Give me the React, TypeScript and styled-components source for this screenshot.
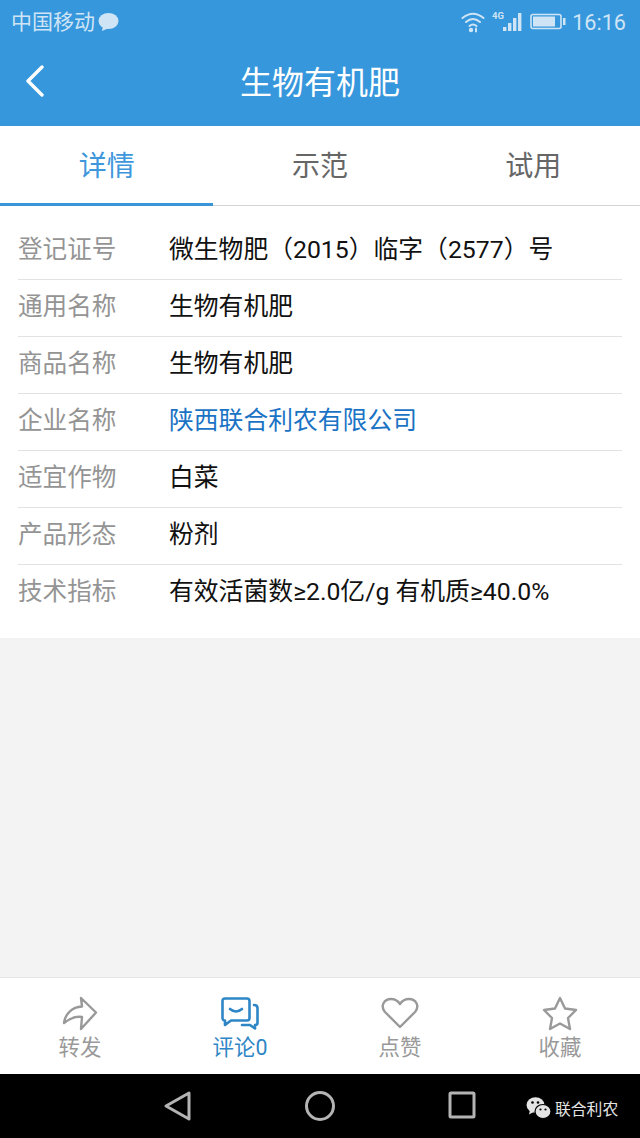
import React from 'react'
import styled, { createGlobalStyle } from 'styled-components'

const GlobalStyle = createGlobalStyle`
  html, body {
    margin: 0;
    padding: 0;
    background: #f3f3f3;
    font-family: Roboto, "Noto Sans CJK SC", sans-serif;
  }
`

/*
* Styles
*/

const Page = styled.div`
  display: flex;
  flex-direction: column;
  height: 1138px;
  width: 640px;
  overflow: hidden;
`

const Header = styled.header`
  background: #3697dc;
  display: flex;
  flex-direction: column;
  height: 126px;
`

const StatusBar = styled.div`
  align-items: center;
  color: #cfe5f6;
  display: flex;
  font-size: 21px;
  height: 43px;
  justify-content: space-between;
  padding: 0 14px 0 11px;
`

const StatusGroup = styled.div`
  align-items: center;
  display: flex;
  gap: ${p => p.$gap}px;
`

const Carrier = styled.span`
  padding-bottom: 4px;
`

const Time = styled.span`
  font-size: 21.6px;
  margin-left: -1px;
  padding-top: 1px;
`

const NavBar = styled.div`
  align-items: center;
  color: #fff;
  display: flex;
  flex: 1;
  font-size: 32px;
  justify-content: center;
  padding-bottom: 10px;
  position: relative;
`

const BackIcon = styled.svg`
  left: 25px;
  position: absolute;
  top: 22px;
`

const Tabs = styled.nav`
  background: #fff;
  border-bottom: 1px solid #d4d4d4;
  display: grid;
  grid-template-columns: repeat(3, 1fr);
  height: 79px;
`

const Tab = styled.div`
  align-items: center;
  border-bottom: ${p => (p.$active ? '3px solid #3a94d8' : 'none')};
  box-sizing: border-box;
  color: ${p => (p.$active ? '#3e97dc' : '#666')};
  display: flex;
  font-size: 28px;
  height: 80px;
  justify-content: center;
  padding-bottom: ${p => (p.$active ? '2px' : '5px')};
`

const Details = styled.section`
  background: #fff;
  box-sizing: border-box;
  display: flex;
  flex-direction: column;
  height: 432px;
  padding: 17px 18px 0;
`

const Row = styled.div`
  align-items: center;
  border-bottom: ${p => (p.$last ? 'none' : '1px solid #e2e2e2')};
  box-sizing: border-box;
  display: flex;
  font-size: 24.8px;
  height: 57px;
  padding-bottom: 9px;
`

const Label = styled.div`
  color: #949494;
  flex: none;
  font-size: 24.6px;
  width: 151px;
`

const Value = styled.div`
  color: ${p => (p.$link ? '#1a73c4' : '#111')};
  white-space: nowrap;
`

const Spacer = styled.div`
  background: #f3f3f3;
  flex: 1;
`

const ActionBar = styled.footer`
  background: #fff;
  border-top: 1px solid #e6e6e6;
  display: grid;
  grid-template-columns: repeat(4, 1fr);
  height: 96px;
`

const Action = styled.div`
  align-items: center;
  color: ${p => (p.$active ? '#2f86c6' : '#999')};
  display: flex;
  flex-direction: column;
  font-size: 21.4px;
  line-height: 26px;
  padding-top: 17px;
`

const ActionIcon = styled.div`
  align-items: center;
  display: flex;
  height: 36px;
  justify-content: center;
  margin-bottom: 4px;
`

const SystemNav = styled.div`
  align-items: center;
  background: #000;
  display: flex;
  height: 64px;
  position: relative;
`

const SystemIcon = styled.svg`
  position: absolute;
  top: 16px;
  left: ${p => p.$left}px;
`

const Watermark = styled.div`
  align-items: center;
  color: #e4e4e4;
  display: flex;
  font-size: 15.8px;
  gap: 3px;
  position: absolute;
  left: 526px;
  top: 22px;
`

/*
* Data
*/

const rows = [
  { label: '登记证号', value: '微生物肥（2015）临字（2577）号' },
  { label: '通用名称', value: '生物有机肥' },
  { label: '商品名称', value: '生物有机肥' },
  { label: '企业名称', value: '陕西联合利农有限公司', link: true },
  { label: '适宜作物', value: '白菜' },
  { label: '产品形态', value: '粉剂' },
  { label: '技术指标', value: '有效活菌数≥2.0亿/g 有机质≥40.0%' },
]

/*
* Icons
*/

const ForwardIcon = () => (
  <svg width="36" height="35" viewBox="0 0 36 35" fill="none" stroke="#999" strokeWidth="2.4" strokeLinejoin="round" strokeLinecap="round">
    <path d="M2 27 C3 18 10 11 20 10.5 L19 2 L34 16.5 L19 33 L20 21 C13 20 7 23 2 27 Z" />
  </svg>
)

const CommentIcon = () => (
  <svg width="38" height="33" viewBox="0 0 38 33" fill="none" stroke="#2f86c6" strokeWidth="2.6" strokeLinejoin="round" strokeLinecap="round">
    <path d="M4 1.5 H26 Q28.5 1.5 28.5 4 V21 Q28.5 23.5 26 23.5 H10 L4 28 V23.5 Q1.5 23.5 1.5 21 V4 Q1.5 1.5 4 1.5 Z" />
    <path d="M33 8 Q36.5 8 36.5 11 V26 Q36.5 28 34 28 V31.5 L29 28 H21" />
    <path d="M9 12 Q15 17 21 12" />
  </svg>
)

const HeartIcon = () => (
  <svg width="38" height="32" viewBox="0 0 38 32" fill="none" stroke="#999" strokeWidth="2.4" strokeLinejoin="round" strokeLinecap="round">
    <path d="M19 30 L4 15 C-1 9 3 2 10 2 C14 2 17 4 19 7 C21 4 24 2 28 2 C35 2 39 9 34 15 Z" />
  </svg>
)

const StarIcon = () => (
  <svg width="36" height="35" viewBox="0 0 36 35" fill="none" stroke="#999" strokeWidth="2.4" strokeLinejoin="round">
    <path d="M18 2 L23 12.5 L34 14 L26 22 L28 33 L18 27.5 L8 33 L10 22 L2 14 L13 12.5 Z" />
  </svg>
)

const WifiIcon = () => (
  <svg width="24" height="22" viewBox="0 0 24 22" fill="none" stroke="#cfe5f6" strokeWidth="2" strokeLinecap="round">
    <path d="M1.5 7 Q12 -1.5 22.5 7" />
    <path d="M5 11 Q12 5 19 11" />
    <path d="M8.5 15 Q12 12 15.5 15" />
    <circle cx="10" cy="19" r="1.2" fill="#cfe5f6" />
    <path d="M15 17.5 V20.5" />
  </svg>
)

const SignalIcon = () => (
  <svg width="31" height="24" viewBox="0 0 31 24" fill="#cfe5f6">
    <text x="0" y="9" fontSize="9.5" fontWeight="700" fontFamily="Roboto, sans-serif">4G</text>
    <rect x="11" y="17" width="3.4" height="4" />
    <rect x="16" y="13" width="3.4" height="8" />
    <rect x="21" y="8" width="3.4" height="13" />
    <rect x="26" y="3" width="3.4" height="18" />
  </svg>
)

const BatteryIcon = () => (
  <svg width="36" height="18" viewBox="0 0 36 18">
    <rect x="1" y="1.5" width="30" height="14" rx="2" fill="none" stroke="#cfe5f6" strokeWidth="1.6" />
    <rect x="3" y="3.5" width="22" height="10" fill="#cfe5f6" />
    <rect x="33" y="5" width="2.5" height="7" fill="#cfe5f6" />
  </svg>
)

const WechatIcon = () => (
  <svg width="26" height="24" viewBox="0 0 26 24">
    <ellipse cx="9.5" cy="9" rx="9" ry="7.8" fill="#e4e4e4" />
    <path d="M4 14 L3 18.5 L8.5 15.5 Z" fill="#e4e4e4" />
    <ellipse cx="17" cy="15.5" rx="8" ry="7" fill="#e4e4e4" stroke="#000" strokeWidth="1.2" />
    <circle cx="6.5" cy="6.5" r="1.3" fill="#000" />
    <circle cx="12" cy="6.5" r="1.3" fill="#000" />
    <circle cx="14.5" cy="13.5" r="1.1" fill="#000" />
    <circle cx="19.5" cy="13.5" r="1.1" fill="#000" />
  </svg>
)

/*
* Components
*/

export default function App() {
  return (
    <Page>
      <GlobalStyle />
      <Header>
        <StatusBar>
          <StatusGroup $gap={3}>
            <Carrier>中国移动</Carrier>
            <svg width="21" height="20" viewBox="0 0 21 20" fill="#cfe5f6">
              <ellipse cx="10.5" cy="9" rx="10" ry="8" />
              <path d="M5 14 L4 19 L11 16 Z" />
            </svg>
          </StatusGroup>
          <StatusGroup $gap={7}>
            <WifiIcon />
            <SignalIcon />
            <BatteryIcon />
            <Time>16:16</Time>
          </StatusGroup>
        </StatusBar>
        <NavBar>
          <BackIcon width="20" height="32" viewBox="0 0 20 32" fill="none" stroke="#fff" strokeWidth="3.4" strokeLinecap="round" strokeLinejoin="round">
            <path d="M17 2 L3 16 L17 30" />
          </BackIcon>
          生物有机肥
        </NavBar>
      </Header>
      <Tabs>
        <Tab $active>详情</Tab>
        <Tab>示范</Tab>
        <Tab>试用</Tab>
      </Tabs>
      <Details>
        {rows.map((row, i) => (
          <Row key={row.label} $last={i === rows.length - 1}>
            <Label>{row.label}</Label>
            <Value $link={row.link}>{row.value}</Value>
          </Row>
        ))}
      </Details>
      <Spacer />
      <ActionBar>
        <Action><ActionIcon><ForwardIcon /></ActionIcon>转发</Action>
        <Action $active><ActionIcon><CommentIcon /></ActionIcon>评论0</Action>
        <Action><ActionIcon><HeartIcon /></ActionIcon>点赞</Action>
        <Action><ActionIcon><StarIcon /></ActionIcon>收藏</Action>
      </ActionBar>
      <SystemNav>
        <SystemIcon $left={163} width="30" height="32" viewBox="0 0 30 32" fill="none" stroke="#b4b4b4" strokeWidth="3" strokeLinejoin="round">
          <path d="M26 3 V29 L3 16 Z" />
        </SystemIcon>
        <SystemIcon $left={304} width="32" height="32" viewBox="0 0 32 32" fill="none" stroke="#b4b4b4" strokeWidth="3">
          <circle cx="16" cy="16" r="13.5" />
        </SystemIcon>
        <SystemIcon $left={448} width="28" height="32" viewBox="0 0 28 32" fill="none" stroke="#b4b4b4" strokeWidth="3" strokeLinejoin="round">
          <rect x="2" y="3" width="24" height="24" rx="1" />
        </SystemIcon>
        <Watermark>
          <WechatIcon />
          联合利农
        </Watermark>
      </SystemNav>
    </Page>
  )
}
